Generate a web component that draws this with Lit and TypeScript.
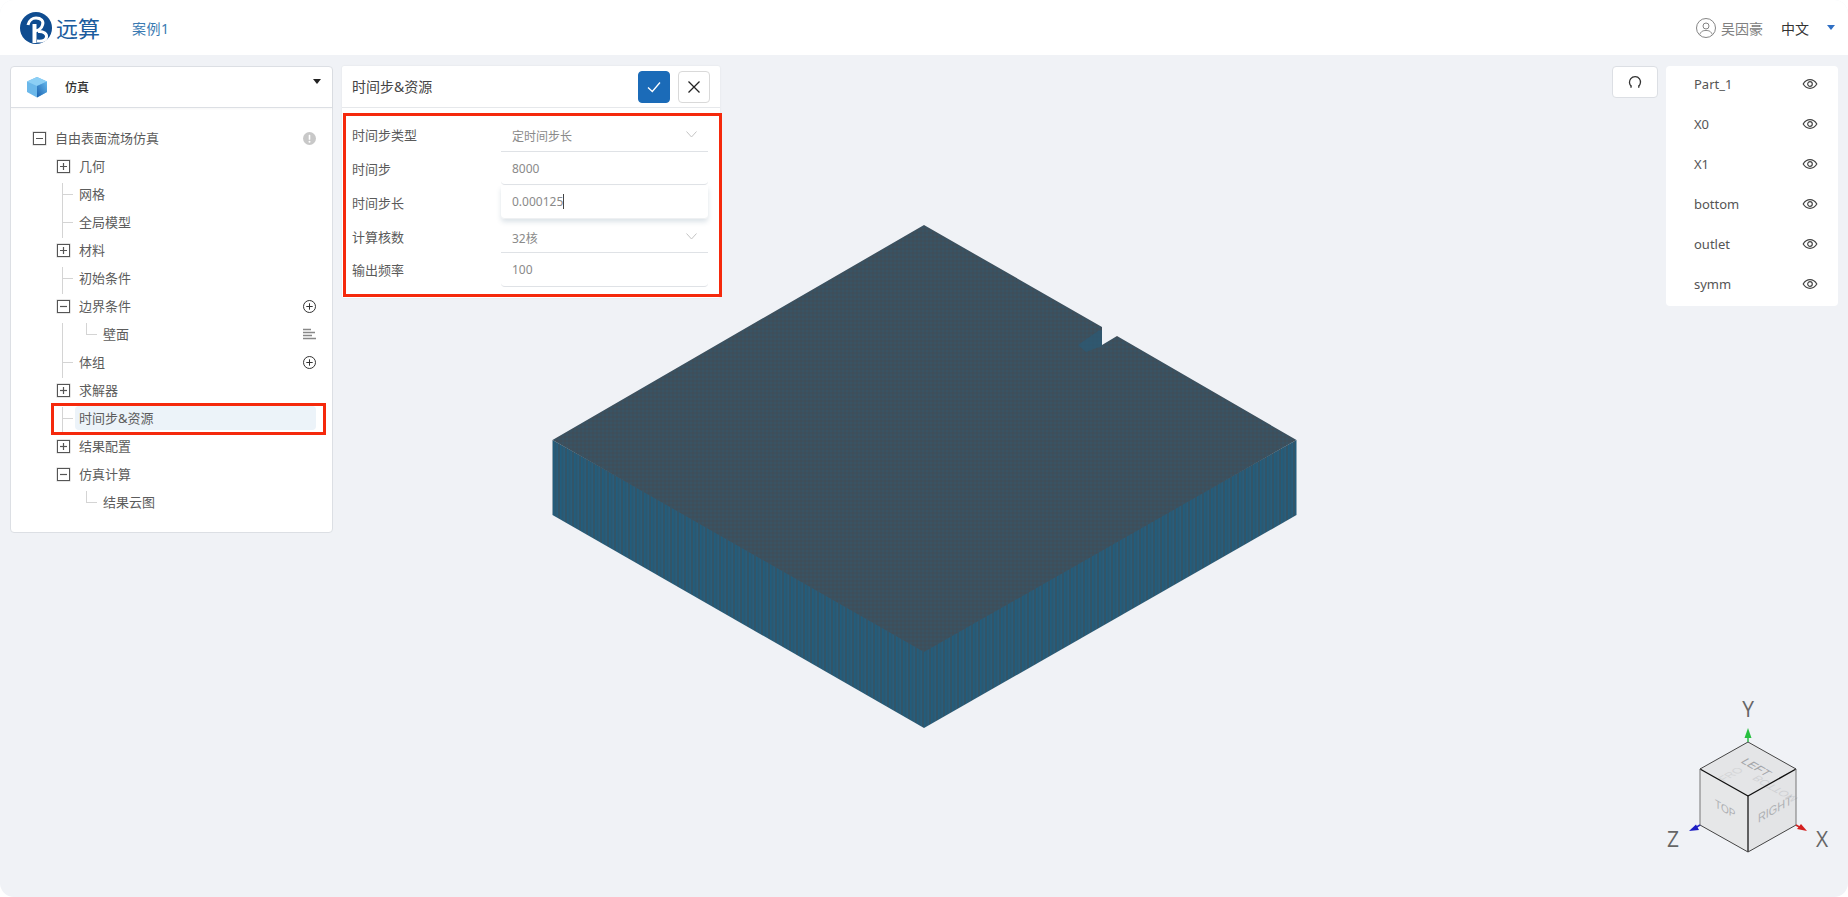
import { LitElement, html, css, svg } from "lit";
import { customElement } from "lit/decorators.js";

type Node = { label: string; depth: number; kind: "minus" | "plus" | "leaf"; action?: "add" | "list" | "warn"; active?: boolean; elbow?: boolean };

const TREE: Node[] = [
  { label: "自由表面流场仿真", depth: 0, kind: "minus", action: "warn" },
  { label: "几何", depth: 1, kind: "plus" },
  { label: "网格", depth: 1, kind: "leaf" },
  { label: "全局模型", depth: 1, kind: "leaf" },
  { label: "材料", depth: 1, kind: "plus" },
  { label: "初始条件", depth: 1, kind: "leaf" },
  { label: "边界条件", depth: 1, kind: "minus", action: "add" },
  { label: "壁面", depth: 2, kind: "leaf", action: "list", elbow: true },
  { label: "体组", depth: 1, kind: "leaf", action: "add" },
  { label: "求解器", depth: 1, kind: "plus" },
  { label: "时间步&资源", depth: 1, kind: "leaf", active: true },
  { label: "结果配置", depth: 1, kind: "plus" },
  { label: "仿真计算", depth: 1, kind: "minus" },
  { label: "结果云图", depth: 2, kind: "leaf", elbow: true },
];

const PARTS = ["Part_1", "X0", "X1", "bottom", "outlet", "symm"];

const FIELDS = [
  { label: "时间步类型", value: "定时间步长", select: true },
  { label: "时间步", value: "8000" },
  { label: "时间步长", value: "0.000125", focus: true },
  { label: "计算核数", value: "32核", select: true },
  { label: "输出频率", value: "100" },
];

const eye = svg`<svg width="16" height="16" viewBox="0 0 16 16" fill="none" stroke="#444" stroke-width="1.2"><path d="M1.2 8C3 5 5.3 3.7 8 3.7S13 5 14.8 8C13 11 10.7 12.3 8 12.3S3 11 1.2 8Z"/><circle cx="8" cy="8" r="2.3"/></svg>`;

@customElement("app-root")
export class AppRoot extends LitElement {
  static styles = css`
    :host { display: block; width: 1848px; height: 897px; background: #fff; font-family: "Noto Sans", "Noto Sans CJK SC", sans-serif; font-size: 13px; color: #5c5c5c; overflow: hidden; }
    .window { position: relative; display: flex; flex-direction: column; width: 100%; height: 100%; background: #f0f2f6; border-radius: 14px; overflow: hidden; }
    .header { position: relative; z-index: 1; flex: none; height: 55px; background: #fff; display: flex; align-items: center; padding: 0 0 0 20px; }
    .brand { font-size: 22px; color: #1a5c9e; margin-left: 4px; line-height: 1; }
    .case { margin-left: 32px; font-size: 14px; letter-spacing: .5px; color: #3a7ab2; }
    .spacer { flex: 1; }
    .user { display: flex; align-items: center; gap: 5px; font-size: 14px; color: #808080; }
    .lang { margin-left: 18px; font-size: 14px; color: #333; }
    .caret { margin: 0 13px 0 18px; width: 0; height: 0; border-left: 4px solid transparent; border-right: 4px solid transparent; border-top: 5px solid #2f6fc4; }
    .main { position: relative; z-index: 1; flex: 1; display: flex; align-items: flex-start; padding: 11px 10px 0 10px; }
    .scene { position: absolute; left: 0; top: 0; z-index: 0; }
    .side { flex: none; width: 323px; height: 467px; background: #fff; border: 1px solid #dcdfe4; border-radius: 4px; box-sizing: border-box; }
    .side-head { position: relative; height: 40px; display: flex; align-items: center; padding-left: 15px; gap: 17px; border-bottom: 1px solid #dcdfe4; font-weight: 500; font-size: 12px; color: #333; box-shadow: 0 1px 2px rgba(0,0,0,.04); }
    .side-head span { padding-bottom: 1px; }
    .side-caret { position: absolute; right: 11px; top: 12px; width: 0; height: 0; border-left: 4px solid transparent; border-right: 4px solid transparent; border-top: 5px solid #222; }
    .tree { padding-top: 16px; }
    .row { position: relative; height: 28px; display: flex; align-items: center; padding-right: 16px; }
    .d0 { padding-left: 22px; } .d1 { padding-left: 46px; } .d2 { padding-left: 92px; }
    .box { flex: none; width: 13px; height: 13px; margin-right: 9px; border: 1px solid #555; box-sizing: border-box; box-shadow: 0 0 0 .5px #ccc; display: flex; align-items: center; justify-content: center; }
    .leaf-pad { flex: none; width: 22px; }
    .line-v { position: absolute; width: 1px; background: #d4d4d4; }
    .line-h { position: absolute; height: 1px; background: #d4d4d4; }
    .label { flex: 1; line-height: 24px; border-radius: 4px; white-space: nowrap; }
    .act { flex: none; width: 13px; height: 13px; display: flex; }
    .active .label { margin-left: -4px; padding-left: 4px; background: #ecf3f9; }
    .mark { position: absolute; left: 40px; right: 6px; top: -1px; height: 32px; border: 3px solid #f5290c; box-sizing: border-box; pointer-events: none; }
    .form { flex: none; margin-left: 9px; width: 378px; height: 232px; background: #fff; border-radius: 2px; box-shadow: 0 0 2px rgba(0,0,0,.08); display: flex; flex-direction: column; }
    .form-head { flex: none; height: 42px; display: flex; align-items: center; padding: 0 10px; border-bottom: 1px solid #e6e8eb; box-sizing: border-box; font-size: 14px; color: #444; }
    .form-head .value { padding-bottom: 2px; }
    .btn { width: 32px; height: 32px; border-radius: 4px; box-sizing: border-box; display: flex; align-items: center; justify-content: center; background: #fff; border: 1px solid #d9d9d9; margin-left: 8px; }
    .btn.ok { background: #1b6bb8; border-color: #1b6bb8; }
    .form-body { flex: none; margin: 5px -2px 0 1px; height: 184px; border: 3px solid #f5290c; box-sizing: border-box; padding: 2px 11px 0 6px; }
    .field { height: 33.75px; display: flex; align-items: center; }
    .field-label { flex: none; width: 149px; color: #5a5a5a; }
    .input { flex: 1; height: 33.5px; align-self: flex-start; display: flex; align-items: center; padding: 0 11px; box-sizing: border-box; border-bottom: 1px solid #dfe2e6; border-radius: 0 0 4px 4px; font-size: 12px; color: #8a8a8a; }
    .input.select { border-radius: 0; padding-top: 4px; }
    .input.select svg { margin-top: -3px; }
    .input.focus { border-bottom-color: #eef0f2; box-shadow: 0 3px 5px rgba(60,100,130,.18); clip-path: inset(0 -8px -8px -8px); }
    .cursor { width: 1px; height: 15px; background: #444; }
    .value { flex: 1; }
    .refresh { flex: none; margin-left: auto; width: 46px; height: 32px; padding: 0; background: #fff; border: 1px solid #dcdfe4; border-radius: 4px; box-sizing: border-box; display: flex; align-items: center; justify-content: center; }
    .parts { flex: none; margin-left: 8px; width: 172px; background: #fff; border-radius: 4px; }
    .part { height: 40px; box-sizing: border-box; display: flex; align-items: center; padding: 0 20px 4px 28px; color: #555; }
    .part span { flex: 1; }
    .part svg { display: block; }
  `;

  private treeRow(n: Node, i: number) {
    const prev = TREE[i - 1];
    const next = TREE[i + 1];
    const top = prev && prev.kind === "leaf" ? 0 : 3;
    const bottom = next && next.kind === "leaf" ? 28 : 30;
    return html`<div class="row d${n.depth} ${n.active ? "active" : ""}">
      ${n.kind === "leaf" && n.depth === 1 ? html`<i class="line-v" style="left:51px;top:${top}px;height:${bottom - top}px"></i><i class="line-h" style="left:52px;top:14px;width:10px"></i><span class="leaf-pad"></span>` : ""}
      ${n.elbow ? html`<i class="line-v" style="left:75px;top:3px;height:11px"></i><i class="line-h" style="left:75px;top:14px;width:11px"></i>` : ""}
      ${n.label === "壁面" ? html`<i class="line-v" style="left:51px;top:3px;height:25px"></i>` : ""}
      ${n.kind !== "leaf" ? html`<span class="box"><svg width="9" height="9" viewBox="0 0 9 9" stroke="#555" stroke-width="1.2"><path d="M1 4.5H8"/>${n.kind === "plus" ? svg`<path d="M4.5 1V8"/>` : ""}</svg></span>` : ""}
      <span class="label">${n.label}</span>
      ${n.action ? html`<span class="act">${this.action(n.action)}</span>` : ""}
      ${n.active ? html`<i class="mark"></i>` : ""}
    </div>`;
  }

  private action(a: string) {
    if (a === "warn") return svg`<svg width="13" height="13" viewBox="0 0 13 13"><circle cx="6.5" cy="6.5" r="6.5" fill="#c8c8c8"/><rect x="5.7" y="2.8" width="1.6" height="5" rx=".6" fill="#fff"/><circle cx="6.5" cy="9.7" r="1" fill="#fff"/></svg>`;
    if (a === "add") return svg`<svg width="13" height="13" viewBox="0 0 13 13" fill="none" stroke="#333" stroke-width="1"><circle cx="6.5" cy="6.5" r="6"/><path d="M6.5 3.3V9.7M3.3 6.5H9.7"/></svg>`;
    return svg`<svg width="13" height="13" viewBox="0 0 13 13" stroke="#888" stroke-width="1.3"><path d="M0 1.5H8M0 4.5H12M0 7.5H9M0 10.5H13"/></svg>`;
  }

  private scene() {
    return svg`<svg class="scene" width="1848" height="897" viewBox="0 0 1848 897">
      <defs>
        <pattern id="sideL" width="7" height="8" patternUnits="userSpaceOnUse">
          <rect width="7" height="8" fill="#2c5870"/><rect x="0" width="1.5" height="8" fill="#225d7d"/><rect x="3.5" width="1.5" height="8" fill="#285d7c"/><rect x="5.5" width="1" height="8" fill="#38525f"/>
        </pattern>
        <pattern id="topF" width="4" height="4" patternUnits="userSpaceOnUse">
          <rect width="4" height="4" fill="#3c505e"/><rect width="2" height="2" fill="#3f4e59"/><rect x="2" y="2" width="2" height="2" fill="#395363"/>
        </pattern>
      </defs>
      <path d="M552.5 440L924 648V728L552.5 515Z" fill="url(#sideL)"/>
      <path d="M924 648L1296.5 440V515L924 728Z" fill="url(#sideL)"/>
      <path d="M924 225L1102 327V345L1117 336L1296.5 440L924 652L552.5 440Z" fill="url(#topF)"/>
      <path d="M1078 345L1098 331L1102 330V346L1086 352Z" fill="#2c5a74" opacity=".75"/>

      <g stroke-linejoin="round">
        <path d="M1748 742L1796 769L1748 796L1700 769Z" fill="#e4e5e7"/>
        <path d="M1700 769L1748 796V852L1700 825Z" fill="#e6e7e8"/>
        <path d="M1748 796L1796 769V825L1748 852Z" fill="#e3e4e6"/>
        <g font-family="Liberation Sans, sans-serif" fill="#b4b6b9">
          <text transform="matrix(.87 .5 -.87 .5 1740 762)" font-size="12" fill="#a2a4a7">LEFT</text>
          <text transform="matrix(.87 -.5 0 1 1758 823)" font-size="12.5" fill="#aeb0b3">RIGHT</text>
          <text transform="matrix(.87 .5 0 1 1715 807)" font-size="11.5" fill="#aeb0b3">TOP</text>
          <text transform="matrix(.87 -.5 .87 .5 1724 782)" font-size="11" fill="#d4d5d7">FRO</text>
          <text transform="matrix(.87 .5 .87 -.5 1758 775)" font-size="11" fill="#d0d1d4">BOTTOM</text>
        </g>
        <path d="M1748 742L1796 769M1748 742L1700 769" stroke="#444" stroke-width="1"/>
        <path d="M1700 769L1748 796L1796 769" stroke="#111" stroke-width="1.4" fill="none"/>
        <path d="M1748 796V852" stroke="#333" stroke-width="1.5"/>
        <path d="M1700 769V825M1796 769V825" stroke="#777" stroke-width="1"/>
        <path d="M1700 825L1748 852L1796 825" stroke="#444" stroke-width="1" fill="none"/>
        <path d="M1748 742V736" stroke="#2fb84a" stroke-width="1.5"/><path d="M1748 728L1751.5 738H1744.5Z" fill="#28c040"/>
        <path d="M1700 825L1695 828" stroke="#2a2ac0" stroke-width="1.5"/><path d="M1689 831L1696 824.5L1699 830Z" fill="#1c1cc4"/>
        <path d="M1796 825L1801 828" stroke="#d42020" stroke-width="1.5"/><path d="M1807 831L1797 829L1801 824Z" fill="#d42020"/>
      </g>
      <g font-family="Open Sans, sans-serif" font-size="21" fill="#666">
        <text x="1748" y="717" text-anchor="middle">Y</text>
        <text x="1673" y="847" text-anchor="middle">Z</text>
        <text x="1822" y="847" text-anchor="middle">X</text>
      </g>
    </svg>`;
  }

  render() {
    return html`<div class="window">
      ${this.scene()}
      <header class="header">
        <svg width="32" height="32" viewBox="0 0 32 32" fill="none" stroke="#fff"><circle cx="16" cy="16" r="16" fill="#0f4c90" stroke="none"/><path d="M8 13C9 8 13 6 16 6C21 6 24 9 22.5 13C21.5 17 18 18.5 15 19" stroke-width="3"/><path d="M14.5 12V31" stroke-width="4"/><path d="M18 19.5C24 19 27 22 26.5 25C26 28 22 29.5 17 29" stroke-width="3"/></svg>
        <span class="brand">远算</span>
        <span class="case">案例1</span>
        <span class="spacer"></span>
        <span class="user">
          <svg width="20" height="20" viewBox="0 0 20 20" fill="none" stroke="#777" stroke-width=".9"><circle cx="10" cy="10" r="9.5"/><circle cx="10" cy="8" r="3"/><path d="M3.8 16.5C5 13 7.5 12.5 10 12.5S15 13 16.2 16.5"/></svg>
          吴因豪
        </span>
        <span class="lang">中文</span>
        <span class="caret"></span>
      </header>
      <div class="main">
        <aside class="side">
          <div class="side-head">
            <svg width="22" height="22" viewBox="0 0 22 22"><defs><linearGradient id="cubeR" x1="0" y1="1" x2="1" y2="0"><stop offset="0" stop-color="#1a62b0"/><stop offset="1" stop-color="#66b8ec"/></linearGradient></defs><path d="M11 1L21 5.5V16L11 21.5L1 16V5.5Z" fill="#6bb8ea"/><path d="M1 5.5L11 10L21 5.5L11 1Z" fill="#8ccff5"/><path d="M11 10L21 5.5V16L11 21.5Z" fill="url(#cubeR)"/></svg>
            <span>仿真</span>
            <i class="side-caret"></i>
          </div>
          <div class="tree">${TREE.map((n, i) => this.treeRow(n, i))}</div>
        </aside>
        <section class="form">
          <div class="form-head">
            <span class="value">时间步&资源</span>
            <span class="btn ok"><svg width="16" height="16" viewBox="0 0 16 16" fill="none" stroke="#fff" stroke-width="1.3"><path d="M2 8.5L6.3 12.5L14 3.5"/></svg></span>
            <span class="btn"><svg width="14" height="14" viewBox="0 0 14 14" fill="none" stroke="#222" stroke-width="1.3"><path d="M1.5 1.5L12.5 12.5M12.5 1.5L1.5 12.5"/></svg></span>
          </div>
          <div class="form-body">
            ${FIELDS.map((f) => html`<div class="field">
              <span class="field-label">${f.label}</span>
              <div class="input ${f.select ? "select" : ""} ${f.focus ? "focus" : ""}">
                <span>${f.value}</span>${f.focus ? html`<i class="cursor"></i>` : ""}
                ${f.select ? html`<span class="spacer"></span><svg width="11" height="7" viewBox="0 0 11 7" fill="none" stroke="#c4c4c4"><path d="M.5 .5L5.5 6L10.5 .5"/></svg>` : ""}
              </div>
            </div>`)}
          </div>
        </section>
        <button class="refresh" aria-label="refresh"><svg width="14" height="14" viewBox="0 0 14 14" fill="none" stroke="#333" stroke-width="1.3"><path d="M3.5 11.5C1 9.5 .8 6 2.8 3.6C5 1 9.5 1 11.5 3.8C13 6 12.8 9.5 10.5 11.5"/><path d="M3 10.5V13M10.8 10.5V13" stroke-width="1"/></svg></button>
        <div class="parts">
          ${PARTS.map((p) => html`<div class="part"><span>${p}</span>${eye}</div>`)}
        </div>
      </div>
    </div>`;
  }
}
